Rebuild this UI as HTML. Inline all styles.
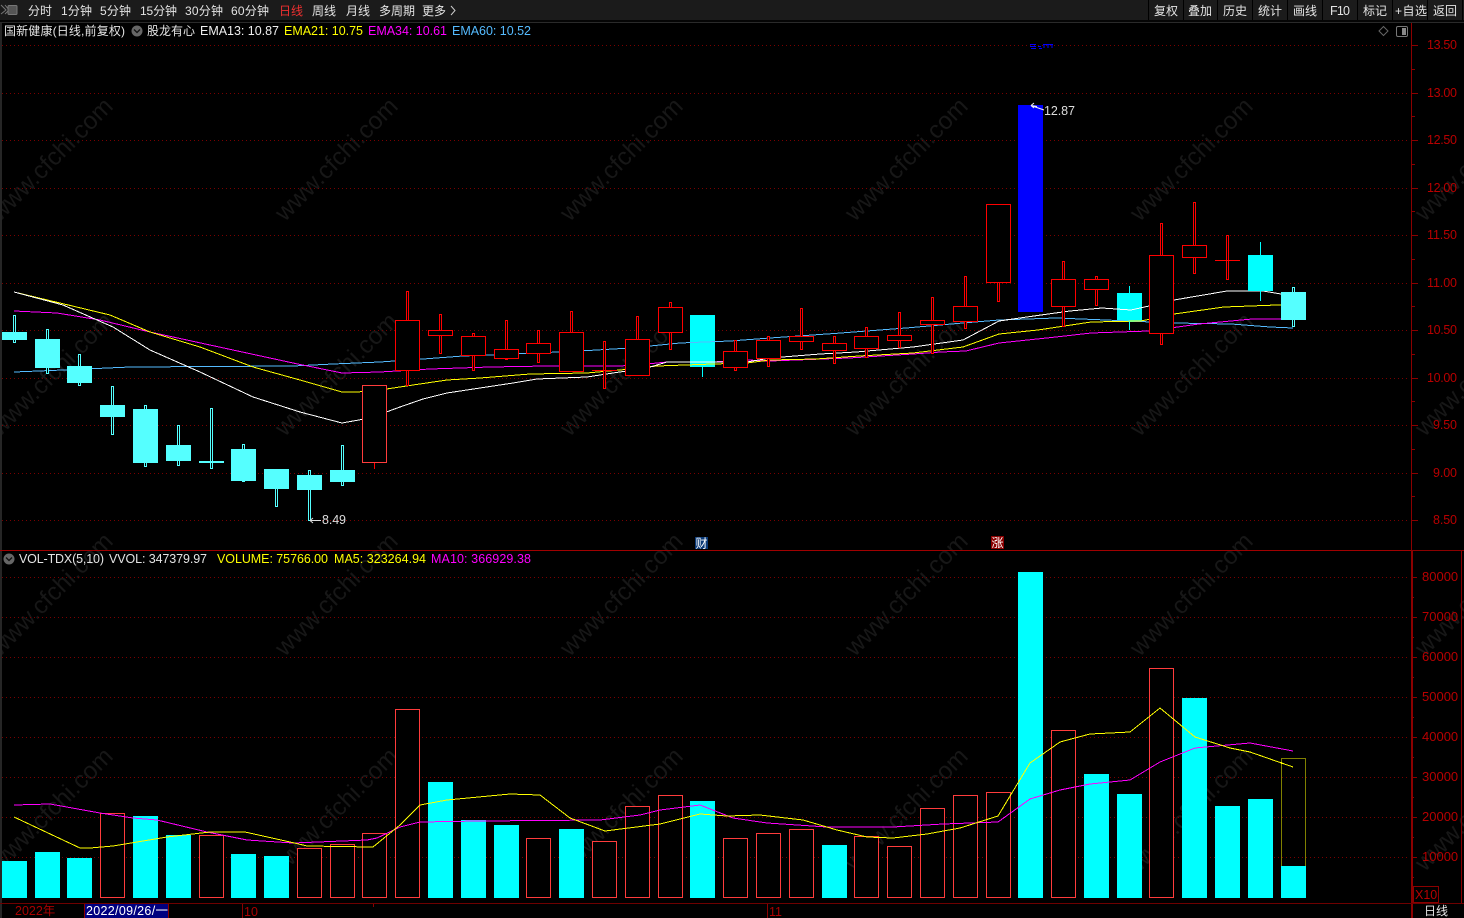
<!DOCTYPE html>
<html><head><meta charset="utf-8"><style>
html,body{margin:0;padding:0;background:#000;width:1464px;height:918px;overflow:hidden}
svg{display:block}
text{font-family:"Liberation Sans","Noto Sans CJK SC",sans-serif;font-size:12px}
.n{font-size:12.5px}
.t{fill:#e4e4e4}
.ax{fill:#b80000;font-size:12.5px}
.ax2{fill:#b80000;font-size:13px}
.g{stroke:#7a0000;stroke-width:1;stroke-dasharray:1 3;fill:none}
.r{fill:#000;stroke:#f00;stroke-width:1}
.rl{stroke:#f00;stroke-width:1;fill:none}
.c{fill:#55ffff}
.cw{fill:#000;stroke:#55ffff;stroke-width:1}
.cf{fill:#0ff}
.v{fill:#000;stroke:#ff3c3c;stroke-width:1}
.a{stroke:#8b0000;fill:none}
.wm{font-size:24.5px;fill:#171717}
polyline{fill:none;stroke-width:1}
</style></head><body>
<svg width="1464" height="918" viewBox="0 0 1464 918" xmlns="http://www.w3.org/2000/svg">
<rect width="1464" height="918" fill="#000"/>
<!-- watermark -->
<g>
<text class="wm" transform="translate(57 165) rotate(-45)" text-anchor="middle">www.cfchi.com</text>
<text class="wm" transform="translate(342 165) rotate(-45)" text-anchor="middle">www.cfchi.com</text>
<text class="wm" transform="translate(627 165) rotate(-45)" text-anchor="middle">www.cfchi.com</text>
<text class="wm" transform="translate(912 165) rotate(-45)" text-anchor="middle">www.cfchi.com</text>
<text class="wm" transform="translate(1197 165) rotate(-45)" text-anchor="middle">www.cfchi.com</text>
<text class="wm" transform="translate(1482 165) rotate(-45)" text-anchor="middle">www.cfchi.com</text>
<text class="wm" transform="translate(57 380) rotate(-45)" text-anchor="middle">www.cfchi.com</text>
<text class="wm" transform="translate(342 380) rotate(-45)" text-anchor="middle">www.cfchi.com</text>
<text class="wm" transform="translate(627 380) rotate(-45)" text-anchor="middle">www.cfchi.com</text>
<text class="wm" transform="translate(912 380) rotate(-45)" text-anchor="middle">www.cfchi.com</text>
<text class="wm" transform="translate(1197 380) rotate(-45)" text-anchor="middle">www.cfchi.com</text>
<text class="wm" transform="translate(1482 380) rotate(-45)" text-anchor="middle">www.cfchi.com</text>
<text class="wm" transform="translate(57 600) rotate(-45)" text-anchor="middle">www.cfchi.com</text>
<text class="wm" transform="translate(342 600) rotate(-45)" text-anchor="middle">www.cfchi.com</text>
<text class="wm" transform="translate(627 600) rotate(-45)" text-anchor="middle">www.cfchi.com</text>
<text class="wm" transform="translate(912 600) rotate(-45)" text-anchor="middle">www.cfchi.com</text>
<text class="wm" transform="translate(1197 600) rotate(-45)" text-anchor="middle">www.cfchi.com</text>
<text class="wm" transform="translate(1482 600) rotate(-45)" text-anchor="middle">www.cfchi.com</text>
<text class="wm" transform="translate(57 815) rotate(-45)" text-anchor="middle">www.cfchi.com</text>
<text class="wm" transform="translate(342 815) rotate(-45)" text-anchor="middle">www.cfchi.com</text>
<text class="wm" transform="translate(627 815) rotate(-45)" text-anchor="middle">www.cfchi.com</text>
<text class="wm" transform="translate(912 815) rotate(-45)" text-anchor="middle">www.cfchi.com</text>
<text class="wm" transform="translate(1197 815) rotate(-45)" text-anchor="middle">www.cfchi.com</text>
<text class="wm" transform="translate(1482 815) rotate(-45)" text-anchor="middle">www.cfchi.com</text>
</g>
<!-- grid -->
<g shape-rendering="crispEdges">
<path class="g" d="M2 45.5H1408M2 93.5H1408M2 140.5H1408M2 188.5H1408M2 235.5H1408M2 283.5H1408M2 330.5H1408M2 378.5H1408M2 425.5H1408M2 473.5H1408M2 520.5H1408"/>
<path class="g" d="M2 577.5H1408M2 617.5H1408M2 657.5H1408M2 697.5H1408M2 737.5H1408M2 777.5H1408M2 817.5H1408M2 857.5H1408"/>
</g>
<!-- under-line candles -->
<g shape-rendering="crispEdges">
<rect class="cf" x="702" y="367" width="1" height="10"/>
<rect class="cf" x="690" y="315" width="25" height="52"/>
<rect class="cf" x="1129" y="286" width="1" height="44"/>
<rect class="cf" x="1117" y="293" width="25" height="29"/>
</g>
<!-- EMA lines -->
<g shape-rendering="crispEdges">
<polyline stroke="#55bbff" points="14,372 63,370 130,367 293,366 333,364 380,362 423,359 463,356 490,355 580,351 630,348 680,343 730,341 770,338 841,333 906,328 963,323 999,320 1056,318 1106,320 1174,323 1231,324 1270,327 1293,328"/>
<polyline stroke="#ff00ff" points="14,311 57,313 100,320 150,332 233,350 293,363 342,373 380,372 430,369 490,367 547,366 620,366 647,364 667,362 713,362 747,360 770,361 849,358 913,354 941,352 966,351 999,343 1056,337 1091,333 1149,331 1199,324 1252,319 1281,319 1293,319"/>
<polyline stroke="#ffff00" points="14,292 110,315 150,332 200,347 253,367 300,380 342,392 357,392 380,390 413,385 447,380 480,378 530,374 587,373 620,370 657,366 713,364 747,363 770,360 816,359 859,356 913,353 963,347 999,334 1038,330 1091,322 1141,321 1174,314 1224,307 1277,305 1293,305"/>
<polyline stroke="#ffffff" points="14,292 63,305 113,327 150,350 200,372 253,397 300,412 342,423 370,418 400,407 423,399 447,393 480,388 513,383 537,379 587,377 613,373 647,368 667,362 713,362 747,362 770,358 820,354 856,352 913,347 963,340 999,321 1041,315 1070,311 1102,308 1131,310 1149,306 1174,300 1227,291 1263,291 1281,294 1293,294"/>
</g>
<!-- candles -->
<g shape-rendering="crispEdges">
<rect class="cw" x="13.5" y="315.5" width="2" height="27"/><rect class="c" x="2" y="332" width="25" height="8"/>
<rect class="cw" x="46.5" y="329.5" width="2" height="44"/><rect class="c" x="35" y="339" width="25" height="29"/>
<rect class="cw" x="78.5" y="354.5" width="2" height="31"/><rect class="c" x="67" y="366" width="25" height="17"/>
<rect class="cw" x="111.5" y="386.5" width="2" height="48"/><rect class="c" x="100" y="405" width="25" height="12"/>
<rect class="cw" x="144.5" y="405.5" width="2" height="61"/><rect class="c" x="133" y="409" width="25" height="54"/>
<rect class="cw" x="177.5" y="425.5" width="2" height="40"/><rect class="c" x="166" y="445" width="25" height="16"/>
<rect class="cw" x="210.5" y="408.5" width="2" height="60"/><rect class="c" x="199" y="461" width="25" height="2"/>
<rect class="cw" x="242.5" y="444.5" width="2" height="37"/><rect class="c" x="231" y="449" width="25" height="32"/>
<rect class="cw" x="275.5" y="469.5" width="2" height="37"/><rect class="c" x="264" y="469" width="25" height="20"/>
<rect class="cw" x="308.5" y="470.5" width="2" height="50"/><rect class="c" x="297" y="475" width="25" height="15"/>
<rect class="cw" x="341.5" y="445.5" width="2" height="40"/><rect class="c" x="330" y="470" width="25" height="12"/>

<path class="rl" d="M374.5 462V469"/><rect x="362.5" y="385.5" width="24" height="77" fill="#000" stroke="#ff3c3c"/>
<rect class="r" x="406.5" y="291.5" width="2" height="94"/><rect class="r" x="395.5" y="320.5" width="24" height="50"/>
<rect class="r" x="439.5" y="314.5" width="2" height="39"/><rect class="r" x="428.5" y="330.5" width="24" height="5"/>
<rect class="r" x="472.5" y="333.5" width="2" height="37"/><rect class="r" x="461.5" y="336.5" width="24" height="19"/>
<rect class="r" x="505.5" y="320.5" width="2" height="39"/><rect class="r" x="494.5" y="349.5" width="24" height="9"/>
<rect class="r" x="537.5" y="330.5" width="2" height="32"/><rect class="r" x="526.5" y="343.5" width="24" height="10"/>
<rect class="r" x="570.5" y="311.5" width="2" height="60"/><rect class="r" x="559.5" y="332.5" width="24" height="39"/>
<rect class="r" x="603.5" y="341.5" width="2" height="47"/><rect x="592" y="370" width="25" height="1" fill="#f00"/>
<rect class="r" x="636.5" y="316.5" width="2" height="59"/><rect class="r" x="625.5" y="339.5" width="24" height="36"/>
<rect class="r" x="669.5" y="302.5" width="2" height="47"/><rect class="r" x="658.5" y="307.5" width="24" height="25"/>
<rect class="r" x="734.5" y="340.5" width="2" height="30"/><rect class="r" x="723.5" y="351.5" width="24" height="16"/>
<rect class="r" x="767.5" y="336.5" width="2" height="30"/><rect class="r" x="756.5" y="340.5" width="24" height="18"/>
<rect class="r" x="800.5" y="308.5" width="2" height="41"/><rect class="r" x="789.5" y="336.5" width="24" height="5"/>
<rect class="r" x="833.5" y="336.5" width="2" height="27"/><rect class="r" x="822.5" y="343.5" width="24" height="7"/>
<rect class="r" x="865.5" y="327.5" width="2" height="30"/><rect class="r" x="854.5" y="336.5" width="24" height="12"/>
<rect class="r" x="898.5" y="312.5" width="2" height="35"/><rect class="r" x="887.5" y="335.5" width="24" height="5"/>
<rect class="r" x="931.5" y="297.5" width="2" height="56"/><rect class="r" x="920.5" y="320.5" width="24" height="4"/>
<rect class="r" x="964.5" y="276.5" width="2" height="52"/><rect class="r" x="953.5" y="306.5" width="24" height="15"/>
<rect class="r" x="997.5" y="282.5" width="2" height="19"/><rect class="r" x="986.5" y="204.5" width="24" height="78"/>
<rect x="1018" y="105" width="25" height="207" fill="#0000ff"/>
<rect class="r" x="1062.5" y="261.5" width="2" height="65"/><rect class="r" x="1051.5" y="279.5" width="24" height="27"/>
<rect class="r" x="1095.5" y="276.5" width="2" height="29"/><rect class="r" x="1084.5" y="279.5" width="24" height="10"/>
<rect class="r" x="1160.5" y="223.5" width="2" height="121"/><rect class="r" x="1149.5" y="255.5" width="24" height="78"/>
<rect class="r" x="1193.5" y="202.5" width="2" height="71"/><rect class="r" x="1182.5" y="245.5" width="24" height="12"/>
<rect class="r" x="1226.5" y="235.5" width="2" height="44"/><rect x="1215" y="260" width="25" height="1" fill="#f00"/>
<rect class="cf" x="1260" y="242" width="1" height="59"/><rect class="cf" x="1248" y="255" width="25" height="36"/>
<rect class="cw" x="1292.5" y="287.5" width="2" height="39"/><rect class="c" x="1281" y="292" width="25" height="28"/>
</g>
<!-- high/low marks -->
<path d="M1037 106.500L1031 105.500M1031 105.500L1034 103M1031 105.500L1034 108M1031 105.500L1044 110" stroke="#eee" fill="none"/>
<text x="1044" y="115" class="n" fill="#ddd" textLength="31">12.87</text>
<path d="M310 520.500H321M310 520.500L313 518M310 520.500L313 523" stroke="#ddd" fill="none"/>
<text x="322" y="524" class="n" fill="#ddd" textLength="24">8.49</text>
<path d="M1030 44.500H1036M1030 46.500H1036M1031 48.500H1036M1038 46.500H1041M1039 48.500H1042M1043 44.500H1053M1044 48V45M1048 48V45M1052 48V45" stroke="#0000ff" fill="none" shape-rendering="crispEdges"/>
<!-- markers -->
<rect x="695" y="537" width="13" height="12" fill="#0b3a78"/>
<text x="695.500" y="547.500" font-size="12" fill="#fff" style="font-size:12px">财</text>
<rect x="991" y="536" width="13" height="13" fill="#8a0000"/>
<text x="991.500" y="547" fill="#fff" style="font-size:12px">涨</text>
<!-- volume bars -->
<g shape-rendering="crispEdges">
<rect class="cf" x="2" y="861" width="25" height="37"/>
<rect class="cf" x="35" y="852" width="25" height="46"/>
<rect class="cf" x="67" y="858" width="25" height="40"/>
<rect class="v" x="100.500" y="813.500" width="24" height="84"/>
<rect class="cf" x="133" y="816" width="25" height="82"/>
<rect class="cf" x="166" y="835" width="25" height="63"/>
<rect class="v" x="199.500" y="835.500" width="24" height="62"/>
<rect class="cf" x="231" y="854" width="25" height="44"/>
<rect class="cf" x="264" y="856" width="25" height="42"/>
<rect class="v" x="297.500" y="848.500" width="24" height="49"/>
<rect class="v" x="330.500" y="844.500" width="24" height="53"/>
<rect class="v" x="362.500" y="833.500" width="24" height="64"/>
<rect class="v" x="395.500" y="709.500" width="24" height="188"/>
<rect class="cf" x="428" y="782" width="25" height="116"/>
<rect class="cf" x="461" y="820" width="25" height="78"/>
<rect class="cf" x="494" y="825" width="25" height="73"/>
<rect class="v" x="526.500" y="838.500" width="24" height="59"/>
<rect class="cf" x="559" y="829" width="25" height="69"/>
<rect class="v" x="592.500" y="841.500" width="24" height="56"/>
<rect class="v" x="625.500" y="806.500" width="24" height="91"/>
<rect class="v" x="658.500" y="795.500" width="24" height="102"/>
<rect class="cf" x="690" y="801" width="25" height="97"/>
<rect class="v" x="723.500" y="838.500" width="24" height="59"/>
<rect class="v" x="756.500" y="833.500" width="24" height="64"/>
<rect class="v" x="789.500" y="829.500" width="24" height="68"/>
<rect class="cf" x="822" y="845" width="25" height="53"/>
<rect class="v" x="854.500" y="836.500" width="24" height="61"/>
<rect class="v" x="887.500" y="846.500" width="24" height="51"/>
<rect class="v" x="920.500" y="808.500" width="24" height="89"/>
<rect class="v" x="953.500" y="795.500" width="24" height="102"/>
<rect class="v" x="986.500" y="792.500" width="24" height="105"/>
<rect class="cf" x="1018" y="572" width="25" height="326"/>
<rect class="v" x="1051.500" y="730.500" width="24" height="167"/>
<rect class="cf" x="1084" y="774" width="25" height="124"/>
<rect class="cf" x="1117" y="794" width="25" height="104"/>
<rect class="v" x="1149.500" y="668.500" width="24" height="229"/>
<rect class="cf" x="1182" y="698" width="25" height="200"/>
<rect class="cf" x="1215" y="806" width="25" height="92"/>
<rect class="cf" x="1248" y="799" width="25" height="99"/>
<rect x="1281.500" y="758.500" width="24" height="139" fill="none" stroke="#ffff00" stroke-dasharray="1 1"/>
<rect class="cf" x="1281" y="866" width="25" height="32"/>
<polyline stroke="#ff00ff" points="14,805 50,804 100,813 133,818 157,820 207,832 247,840 293,843 367,840 377,838 400,827 420,822 480,821 600,820 640,815 660,810 700,805 733,818 767,823 827,827 893,827 943,824 998,822 1030,799 1060,790 1090,784 1130,780 1160,762 1195,748 1250,743 1293,751"/>
<polyline stroke="#ffff00" points="14,817 80,848 90,848 113,846 167,837 210,832 245,832 290,842 307,846 373,847 400,825 420,805 447,800 510,794 540,795 570,818 605,831 660,824 700,814 727,816 760,815 803,820 837,830 867,837 893,838 927,834 960,828 998,816 1030,763 1060,742 1090,734 1130,732 1160,708 1195,737 1230,748 1250,752 1293,767"/>
</g>
<!-- frame -->
<g shape-rendering="crispEdges">
<rect x="0" y="22" width="2" height="896" fill="#262626"/>
<rect x="0" y="550" width="1411" height="1" fill="#a00000"/>
<rect x="1411" y="22" width="1" height="880" fill="#8b0000"/>
<rect x="1412" y="550" width="52" height="1" fill="#8b0000"/>
<rect x="1411" y="550" width="2" height="368" fill="#8b0000"/>
<rect x="1461" y="550" width="1" height="353" fill="#8b0000"/>
<rect x="0" y="903" width="1464" height="1" fill="#6e0000"/>
<path class="a" d="M1411 45.500h7M1411 93.500h7M1411 140.500h7M1411 188.500h7M1411 235.500h7M1411 283.500h7M1411 330.500h7M1411 378.500h7M1411 425.500h7M1411 473.500h7M1411 520.500h7M1411 69.500h4M1411 116.500h4M1411 164.500h4M1411 211.500h4M1411 259.500h4M1411 306.500h4M1411 354.500h4M1411 401.500h4M1411 449.500h4M1411 496.500h4"/>
<path class="a" d="M1411 577.500h6M1411 617.500h6M1411 657.500h6M1411 697.500h6M1411 737.500h6M1411 777.500h6M1411 817.500h6M1411 857.500h6M1411 597.500h3M1411 637.500h3M1411 677.500h3M1411 717.500h3M1411 757.500h3M1411 797.500h3M1411 837.500h3M1411 877.500h3"/>
<rect x="1413.500" y="886.500" width="25" height="16" fill="none" stroke="#8b0000"/>
<path class="a" d="M84.500 904V918M168.500 904V918M242.500 904V918M767.500 904V918M373.500 904V907"/>
<rect x="85" y="904" width="83" height="14" fill="#000080"/>
</g>
<!-- axis labels -->
<g>
<text class="ax" x="1427" y="49" textLength="30">13.50</text>
<text class="ax" x="1427" y="97" textLength="30">13.00</text>
<text class="ax" x="1427" y="144" textLength="30">12.50</text>
<text class="ax" x="1427" y="192" textLength="30">12.00</text>
<text class="ax" x="1427" y="239" textLength="30">11.50</text>
<text class="ax" x="1427" y="287" textLength="30">11.00</text>
<text class="ax" x="1427" y="334" textLength="30">10.50</text>
<text class="ax" x="1427" y="382" textLength="30">10.00</text>
<text class="ax" x="1433" y="429" textLength="24">9.50</text>
<text class="ax" x="1433" y="477" textLength="24">9.00</text>
<text class="ax" x="1433" y="524" textLength="24">8.50</text>
<text class="ax2" x="1422" y="581">80000</text>
<text class="ax2" x="1422" y="621">70000</text>
<text class="ax2" x="1422" y="661">60000</text>
<text class="ax2" x="1422" y="701">50000</text>
<text class="ax2" x="1422" y="741">40000</text>
<text class="ax2" x="1422" y="781">30000</text>
<text class="ax2" x="1422" y="821">20000</text>
<text class="ax2" x="1422" y="861">10000</text>
<text class="ax" x="1415" y="899">X10</text>
<text x="15" y="915" fill="#a80000" style="font-size:12.5px">2022年</text>
<text x="86" y="915" fill="#fff" style="font-size:12.5px" textLength="82">2022/09/26/一</text>
<text x="244" y="916" fill="#a80000" style="font-size:12.5px">10</text>
<text x="769" y="916" fill="#a80000" style="font-size:12.5px">11</text>
<text x="1424" y="915" fill="#e4e4e4">日线</text>
</g>
<!-- toolbar -->
<g shape-rendering="crispEdges">
<rect x="0" y="0" width="1464" height="20" fill="#1b1b1b"/>
<rect x="0" y="20" width="1464" height="2" fill="#050505"/>
<rect x="0" y="22" width="1464" height="1" fill="#2a2a2a"/>
<path stroke="#000" d="M1148.500 0V20M1183.500 0V20M1217.500 0V20M1252.500 0V20M1287.500 0V20M1322.500 0V20M1357.500 0V20M1392.500 0V20M1427.500 0V20M1462.500 0V20"/>
</g>
<path d="M1 5L6 10L1 14M5 5L9 10L5 14" stroke="#777" fill="none"/>
<rect x="8" y="5.500" width="9" height="9" rx="1" fill="#555" stroke="#777"/>
<g class="t">
<text x="28" y="15">分时</text>
<text x="61" y="15" textLength="31">1分钟</text>
<text x="100" y="15" textLength="31">5分钟</text>
<text x="140" y="15" textLength="37">15分钟</text>
<text x="185" y="15" textLength="38">30分钟</text>
<text x="231" y="15" textLength="38">60分钟</text>
<text x="279" y="15" fill="#ee3030">日线</text>
<text x="312" y="15">周线</text>
<text x="346" y="15">月线</text>
<text x="379" y="15">多周期</text>
<text x="422" y="15">更多</text>
<path d="M451 6L455 10.500L451 15" stroke="#ccc" fill="none"/>
<text x="1154" y="15">复权</text>
<text x="1188" y="15">叠加</text>
<text x="1223" y="15">历史</text>
<text x="1258" y="15">统计</text>
<text x="1293" y="15">画线</text>
<text x="1330" y="15" class="n" textLength="20">F10</text>
<text x="1363" y="15">标记</text>
<text x="1395" y="15" textLength="32">+自选</text>
<text x="1433" y="15">返回</text>
</g>
<!-- info rows -->
<g>
<text x="4" y="35" class="t" textLength="121">国新健康(日线,前复权)</text>
<circle cx="137" cy="31" r="5.500" fill="#666"/>
<path d="M134 29.500L137 32.500L140 29.500" stroke="#111" stroke-width="1.300" fill="none"/>
<text x="147" y="35" class="t">股龙有心</text>
<text x="200" y="35" class="n" fill="#eee" textLength="79">EMA13: 10.87</text>
<text x="284" y="35" class="n" fill="#ffff00" textLength="79">EMA21: 10.75</text>
<text x="368" y="35" class="n" fill="#ff00ff" textLength="79">EMA34: 10.61</text>
<text x="452" y="35" class="n" fill="#55bbff" textLength="79">EMA60: 10.52</text>
<path d="M1383.500 26.500L1388 31L1383.500 35.500L1379 31Z" stroke="#666" fill="none"/>
<rect x="1396.500" y="26.500" width="11" height="10" rx="1.500" stroke="#777" fill="none"/>
<rect x="1402" y="28" width="4" height="7" fill="#888"/>
<circle cx="9" cy="559" r="5.500" fill="#666"/>
<path d="M6 557.500L9 560.500L12 557.500" stroke="#111" stroke-width="1.300" fill="none"/>
<text x="19" y="563" class="n" fill="#e4e4e4" textLength="85">VOL-TDX(5,10)</text>
<text x="109" y="563" class="n" fill="#e4e4e4" textLength="98">VVOL: 347379.97</text>
<text x="217" y="563" class="n" fill="#ffff00" textLength="111">VOLUME: 75766.00</text>
<text x="334" y="563" class="n" fill="#ffff00" textLength="92">MA5: 323264.94</text>
<text x="431" y="563" class="n" fill="#ff00ff" textLength="100">MA10: 366929.38</text>
</g>
</svg>
</body></html>
